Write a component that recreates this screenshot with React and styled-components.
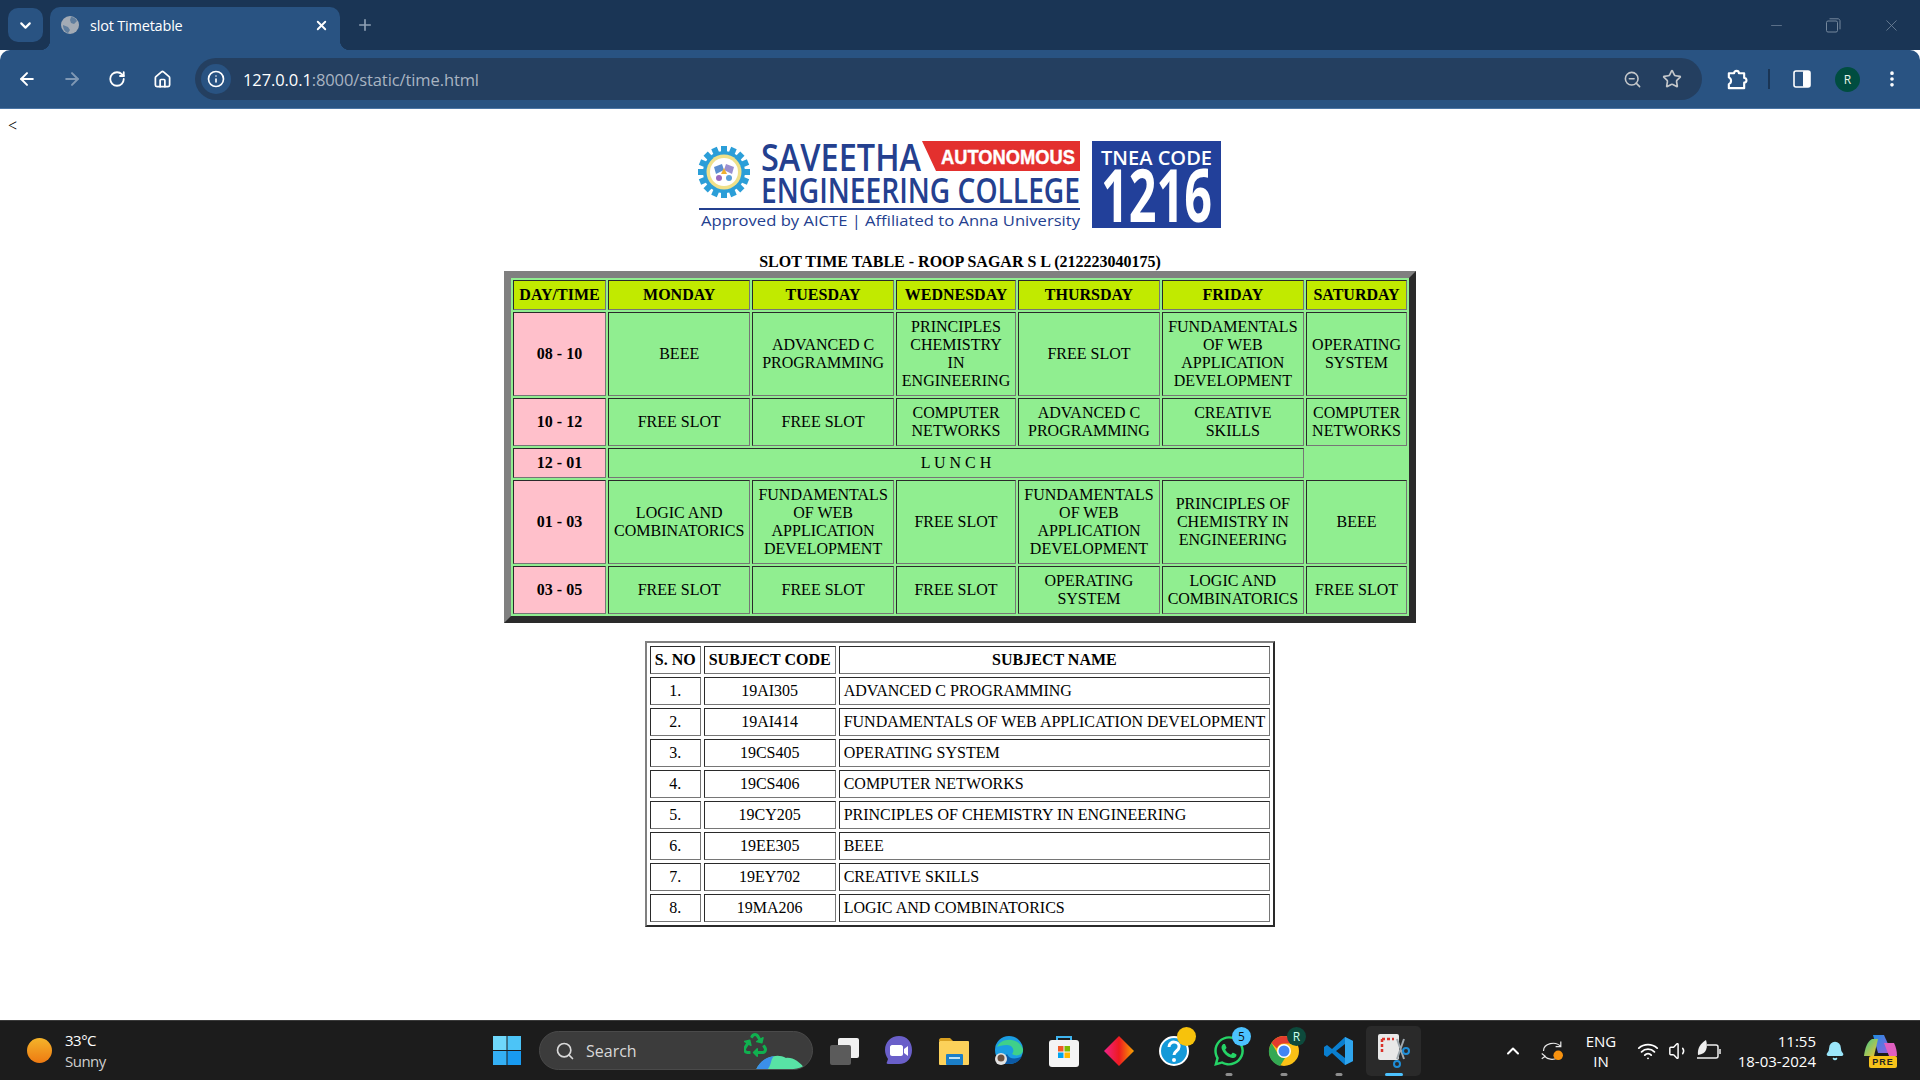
import React from "react";
import styled, { createGlobalStyle } from "styled-components";
import {
  ArrowLeft, ArrowRight, RotateCw, Home, Info, ZoomOut, Star, MoreVertical,
  ChevronDown, ChevronUp, X, Plus, Minus, Wifi, Volume1, Bell, Search,
} from "lucide-react";
import { FaRecycle, FaWhatsapp } from "react-icons/fa";

const UI_FONT = `"Open Sans", "Noto Sans", sans-serif`;

const GlobalStyle = createGlobalStyle`
  html, body { margin: 0; padding: 0; background: #fff; }
  body { width: 1920px; height: 1080px; overflow: hidden; }
`;

const Screen = styled.div`
  width: 1920px;
  height: 1080px;
  display: flex;
  flex-direction: column;
  overflow: hidden;
`;

/* browser chrome */
const TabStrip = styled.div`
  height: 50px;
  flex: none;
  background: #1a3555;
  display: flex;
  align-items: flex-end;
  padding-left: 8px;
  font-family: ${UI_FONT};
`;
const TabMenu = styled.div`
  width: 35px;
  height: 34px;
  margin-bottom: 8px;
  border-radius: 10px;
  background: #295382;
  color: #fff;
  display: flex;
  align-items: center;
  justify-content: center;
`;
const Tab = styled.div`
  position: relative;
  width: 290px;
  height: 43px;
  margin-left: 7px;
  padding: 0 11px 7px;
  box-sizing: border-box;
  background: #295382;
  border-radius: 10px 10px 0 0;
  display: flex;
  align-items: center;
  color: #fff;
  &::before, &::after {
    content: "";
    position: absolute;
    bottom: 0;
    width: 10px;
    height: 10px;
  }
  &::before { left: -10px; background: radial-gradient(circle at 0 0, transparent 10px, #295382 10.5px); }
  &::after { right: -10px; background: radial-gradient(circle at 100% 0, transparent 10px, #295382 10.5px); }
`;
const TabTitle = styled.span`
  flex: 1;
  margin-left: 11px;
  font-size: 14.5px;
  letter-spacing: -0.2px;
`;
const NewTab = styled.div`
  margin: 0 0 8px 16px;
  height: 34px;
  display: flex;
  align-items: center;
  color: #8ea0b4;
`;
const WindowControls = styled.div`
  margin-left: auto;
  height: 50px;
  display: flex;
  align-items: center;
  color: #75889d;
  padding-right: 19px;
  gap: 41px;
`;
const Toolbar = styled.div`
  height: 59px;
  flex: none;
  box-sizing: border-box;
  background: #295382;
  border-radius: 10px 10px 0 0;
  border-bottom: 1px solid #4a74a3;
  display: flex;
  align-items: center;
  padding-left: 9px;
  font-family: ${UI_FONT};
  position: relative;
  &::before {
    content: "";
    position: absolute;
    inset: 0 0 auto 0;
    height: 10px;
    z-index: -1;
    background: #1a3555;
  }
`;
const NavButton = styled.div`
  width: 36px;
  height: 36px;
  margin-right: ${(p) => p.$gap ?? 9}px;
  flex: none;
  display: flex;
  align-items: center;
  justify-content: center;
  color: ${(p) => (p.$dim ? "#7f98b4" : "#fff")};
`;
const Omnibox = styled.div`
  flex: 1;
  height: 42px;
  margin-left: 15px;
  border-radius: 21px;
  background: #243f60;
  display: flex;
  align-items: center;
  padding: 0 17px 0 6px;
`;
const InfoBadge = styled.div`
  width: 30px;
  height: 30px;
  border-radius: 50%;
  background: #295382;
  color: #fff;
  display: flex;
  align-items: center;
  justify-content: center;
`;
const Url = styled.div`
  margin-left: 12px;
  flex: 1;
  font-size: 16.5px;
  letter-spacing: -0.1px;
  color: #a9b4c2;
  b { font-weight: 400; color: #fff; }
`;
const OmniIcon = styled.div`
  width: 26px;
  margin-left: 14px;
  display: flex;
  justify-content: center;
  color: #c4c7ca;
`;
const ToolbarEnd = styled.div`
  width: 218px;
  flex: none;
  height: 100%;
  display: flex;
  align-items: center;
  color: #fff;
`;
const ToolSlot = styled.div`
  flex: none;
  width: ${(p) => p.$w}px;
  margin-left: ${(p) => p.$ml}px;
  display: flex;
  justify-content: center;
`;
const Divider = styled.div`
  width: 2px;
  height: 20px;
  margin-left: 20px;
  background: #1a3555;
`;
const Avatar = styled.div`
  width: 25px;
  height: 25px;
  border-radius: 50%;
  background: #004d40;
  color: #e8f5e9;
  font-size: 12px;
  display: flex;
  align-items: center;
  justify-content: center;
`;

/* page */
const Page = styled.main`
  flex: 1;
  min-height: 0;
  padding: 8px;
  background: #fff;
  font-family: "Liberation Serif", "Times New Roman", serif;
  font-size: 16px;
  line-height: 18px;
  color: #000;
`;
const BackLink = styled.div`
  height: 18px;
`;
const Logo = styled.svg`
  display: block;
  width: 524px;
  height: 90px;
  margin: 5px auto 0;
`;
const Title = styled.div`
  margin-top: 23px;
  text-align: center;
  font-weight: 700;
  height: 18px;
`;
const Slots = styled.table`
  margin: 0 auto;
  width: 912px;
  border-collapse: separate;
  border-spacing: 2px;
  border-style: solid;
  border-width: 7px;
  border-color: #808080 #2a2a2a #2a2a2a #808080;
  background: #90ee90;
  text-align: center;
`;
const Cell = styled.td`
  padding: 5px;
  border: 1px solid;
  border-color: #2a2a2a #767676 #767676 #2a2a2a;
  background: ${(p) => p.$bg || "transparent"};
  font-weight: ${(p) => (p.$bold ? 700 : 400)};
  ${(p) => p.$w && `width: ${p.$w}px;`}
`;
const Subjects = styled.table`
  margin: 18px auto 0;
  border-collapse: separate;
  border-spacing: 3px;
  border-style: solid;
  border-width: 2px;
  border-color: #808080 #2a2a2a #2a2a2a #808080;
`;
const SubjectCell = styled.td`
  padding: 4px;
  border: 1px solid;
  border-color: #2a2a2a #767676 #767676 #2a2a2a;
  text-align: ${(p) => (p.$left ? "left" : "center")};
  font-weight: ${(p) => (p.$bold ? 700 : 400)};
`;

/* taskbar */
const Taskbar = styled.footer`
  height: 60px;
  flex: none;
  box-sizing: border-box;
  background: #1c1c1c;
  border-top: 1px solid #3a3a3a;
  display: grid;
  grid-template-columns: 480px 960px 480px;
  font-family: ${UI_FONT};
  color: #fff;
`;
const Weather = styled.div`
  display: flex;
  align-items: center;
  padding-left: 27px;
`;
const Sun = styled.div`
  width: 25px;
  height: 25px;
  border-radius: 50%;
  background: linear-gradient(#f4b42a, #ee7a12);
`;
const WeatherText = styled.div`
  margin-left: 13px;
  font-size: 15px;
  line-height: 21px;
  letter-spacing: -0.5px;
  span { display: block; color: #cfcfcf; }
`;
const Centre = styled.div`
  display: flex;
  align-items: center;
  padding-left: 13px;
`;
const SearchPill = styled.div`
  width: 274px;
  height: 39px;
  margin-left: 18px;
  box-sizing: border-box;
  padding-left: 15px;
  border-radius: 20px;
  background: #3c3c3c;
  border: 1px solid #4a4a4a;
  display: flex;
  align-items: center;
  color: #d8d8d8;
  font-size: 16px;
  overflow: hidden;
`;
const SearchText = styled.span`
  margin-left: 11px;
  flex: 1;
`;
const Apps = styled.div`
  display: flex;
  margin-left: 3px;
`;
const AppSlot = styled.div`
  position: relative;
  width: 55px;
  height: 50px;
  display: flex;
  align-items: center;
  justify-content: center;
  border-radius: 5px;
  ${(p) => p.$active && "background: #2a2a2a;"}
  &::after {
    content: "";
    display: ${(p) => (p.$open || p.$active ? "block" : "none")};
    position: absolute;
    bottom: 0;
    left: 50%;
    transform: translateX(-50%);
    width: ${(p) => (p.$active ? 18 : 7)}px;
    height: 3px;
    border-radius: 2px;
    background: ${(p) => (p.$active ? "#4cc2ff" : "#8e8e8e")};
  }
`;
const Count = styled.span`
  position: absolute;
  top: 1px;
  right: 5px;
  width: 19px;
  height: 19px;
  border-radius: 50%;
  background: ${(p) => p.$bg};
  color: ${(p) => p.$fg};
  font-size: 12px;
  line-height: 19px;
  text-align: center;
`;
const Tray = styled.div`
  display: flex;
  align-items: center;
  padding-left: 63px;
  font-size: 15px;
`;
const TrayItem = styled.div`
  flex: none;
  width: ${(p) => p.$w}px;
  margin-left: ${(p) => p.$ml || 0}px;
  display: flex;
  flex-direction: column;
  align-items: ${(p) => p.$align || "center"};
  justify-content: center;
  line-height: 20px;
  white-space: nowrap;
`;

const WHITE = "#ffffff";
const HEAD = "#c1ea00";
const PINK = "#ffc0cb";

const DAYS = ["MONDAY", "TUESDAY", "WEDNESDAY", "THURSDAY", "FRIDAY", "SATURDAY"];
const ROWS = [
  ["08 - 10", "BEEE", "ADVANCED C PROGRAMMING", "PRINCIPLES CHEMISTRY IN ENGINEERING", "FREE SLOT", "FUNDAMENTALS OF WEB APPLICATION DEVELOPMENT", "OPERATING SYSTEM"],
  ["10 - 12", "FREE SLOT", "FREE SLOT", "COMPUTER NETWORKS", "ADVANCED C PROGRAMMING", "CREATIVE SKILLS", "COMPUTER NETWORKS"],
  ["12 - 01"],
  ["01 - 03", "LOGIC AND COMBINATORICS", "FUNDAMENTALS OF WEB APPLICATION DEVELOPMENT", "FREE SLOT", "FUNDAMENTALS OF WEB APPLICATION DEVELOPMENT", "PRINCIPLES OF CHEMISTRY IN ENGINEERING", "BEEE"],
  ["03 - 05", "FREE SLOT", "FREE SLOT", "FREE SLOT", "OPERATING SYSTEM", "LOGIC AND COMBINATORICS", "FREE SLOT"],
];
const SUBJECTS = [
  ["19AI305", "ADVANCED C PROGRAMMING"],
  ["19AI414", "FUNDAMENTALS OF WEB APPLICATION DEVELOPMENT"],
  ["19CS405", "OPERATING SYSTEM"],
  ["19CS406", "COMPUTER NETWORKS"],
  ["19CY205", "PRINCIPLES OF CHEMISTRY IN ENGINEERING"],
  ["19EE305", "BEEE"],
  ["19EY702", "CREATIVE SKILLS"],
  ["19MA206", "LOGIC AND COMBINATORICS"],
];

const CollegeLogo = () => {
  const teeth = Array.from({ length: 16 }, (_, i) => i * 22.5);
  return (
    <Logo viewBox="698 140 524 90" aria-label="Saveetha Engineering College">
      <g transform="translate(724 172)">
        {teeth.map((a) => (
          <rect key={a} x="-3" y="-26" width="6" height="7" fill="#2b9ed8" transform={`rotate(${a})`} />
        ))}
        <circle r="21" fill="#2b9ed8" />
        <circle r="17.5" fill="#efe08a" />
        <circle r="14" fill="#fff" />
        <path d="M-10 -5 L-2 -8 L0 -2 L-8 2Z" fill="#5b8fd0" />
        <path d="M10 -5 L2 -8 L0 -2 L8 2Z" fill="#9a8fd0" />
        <path d="M0 -4 L3 2 L-3 2Z" fill="#f0b030" />
        <circle cx="-5" cy="6" r="3" fill="#9a6bc0" />
        <circle cx="5" cy="6" r="3" fill="#5aa0d8" />
      </g>
      <text x="761" y="171" fontFamily="Open Sans, sans-serif" fontWeight="600" fontSize="38" fill="#24408f" textLength="160" lengthAdjust="spacingAndGlyphs">SAVEETHA</text>
      <path d="M922 141 H1080 V171 H936Z" fill="#e3302e" />
      <text x="941" y="164" fontFamily="Liberation Sans, sans-serif" fontWeight="700" fontSize="20" fill="#fff" stroke="#fff" strokeWidth="0.4" textLength="134" lengthAdjust="spacingAndGlyphs">AUTONOMOUS</text>
      <text x="761" y="203" fontFamily="Open Sans, sans-serif" fontWeight="600" fontSize="35" fill="#24408f" textLength="319" lengthAdjust="spacingAndGlyphs">ENGINEERING COLLEGE</text>
      <rect x="699" y="208" width="381" height="2" fill="#24408f" />
      <text x="701" y="226" fontFamily="Open Sans, sans-serif" fontSize="15" fill="#24408f" textLength="379" lengthAdjust="spacingAndGlyphs">Approved by AICTE  |  Affiliated to Anna University</text>
      <rect x="1092" y="141" width="129" height="87" fill="#22409a" />
      <text x="1101" y="165" fontFamily="Open Sans, sans-serif" fontWeight="600" fontSize="20" fill="#fff" textLength="111" lengthAdjust="spacingAndGlyphs">TNEA CODE</text>
      <text x="1101" y="222" fontFamily="Open Sans, sans-serif" fontWeight="700" fontSize="74" fill="#fff" textLength="111" lengthAdjust="spacingAndGlyphs">1216</text>
    </Logo>
  );
};

const Favicon = () => (
  <svg width="18" height="18" viewBox="0 0 18 18" style={{ flex: "none" }}>
    <circle cx="9" cy="9" r="9" fill="#a3abb5" />
    <path d="M10 1c3 0 5 2 6 4l-3 3-3-1-1-3ZM2 9l5 2 2 3-2 3C4 16 2 13 2 9Z" fill="#5f7d9d" />
  </svg>
);
const RestoreIcon = () => (
  <svg width="15" height="15" viewBox="0 0 15 15" fill="none" stroke="currentColor">
    <rect x="0.5" y="3" width="11" height="11" rx="1.5" />
    <path d="M3.5 0.8h8.5c1 0 2 1 2 2v8.5" />
  </svg>
);
const PuzzleIcon = () => (
  <svg width="23" height="23" viewBox="0 0 24 24" fill="none" stroke="#fff" strokeWidth="2.2" strokeLinejoin="round">
    <path d="M4 5.5h5.5a2.5 2.5 0 0 1 5 0H20v5a2.4 2.4 0 0 1 0 4.8V21H4v-4.2a3.8 3.8 0 0 0 0-7Z" />
  </svg>
);
const TaskView = () => (
  <svg width="30" height="30" viewBox="0 0 30 30">
    <rect x="9" y="2" width="21" height="20" rx="2" fill="#f0f0f0" />
    <rect x="1" y="9" width="21" height="20" rx="2" fill="#5b5b5b" />
  </svg>
);
const Teams = () => (
  <svg width="30" height="32" viewBox="0 0 30 32">
    <path d="M15 1c8 0 13 6 13 14s-5 14-13 14H4c-1 0-2-1-1-2l1-3C2 21 1 18 1 15 1 7 7 1 15 1Z" fill="#6a5fc9" />
    <path d="M8 10h9c1 0 2 1 2 2v7c0 1-1 2-2 2H8c-1 0-2-1-2-2v-7c0-1 1-2 2-2Z" fill="#fff" />
    <path d="M20 14l4-3v10l-4-3Z" fill="#fff" />
  </svg>
);
const Folder = () => (
  <svg width="30" height="28" viewBox="0 0 30 28">
    <path d="M0 3c0-1 1-2 2-2h9l3 3h-14Z" fill="#d9a020" />
    <rect y="4" width="30" height="24" rx="1" fill="#fcd15a" />
    <rect x="7" y="17" width="17" height="11" rx="1" fill="#1b7fc8" />
    <rect x="10" y="20" width="11" height="2" fill="#bfe3f7" />
  </svg>
);
const Edge = () => (
  <svg width="30" height="32" viewBox="0 0 30 32">
    <circle cx="15" cy="15" r="14" fill="#1b9de2" />
    <path d="M3 12C6 3 24 1 29 14c1 6-7 8-11 5 3-3 1-9-5-9-5 0-8 1-10 2Z" fill="#3fd08a" />
    <path d="M15 29c6 0 11-3 13-8-4 3-13 4-15-2l-8 8c3 2 6 2 10 2Z" fill="#0c5aa6" />
    <circle cx="7" cy="24" r="6" fill="#e2e2e2" />
    <circle cx="7" cy="23" r="3.5" fill="#6a5040" />
  </svg>
);
const Store = () => (
  <svg width="30" height="32" viewBox="0 0 30 32">
    <path d="M8 5V2h14v3" fill="none" stroke="#3fb4ee" strokeWidth="2" />
    <rect y="5" width="30" height="27" rx="3" fill="#f4f4f4" />
    <rect x="9" y="11" width="5.5" height="5.5" fill="#ef5a28" />
    <rect x="15.5" y="11" width="5.5" height="5.5" fill="#7fba00" />
    <rect x="9" y="17.5" width="5.5" height="5.5" fill="#00a4ef" />
    <rect x="15.5" y="17.5" width="5.5" height="5.5" fill="#ffb900" />
  </svg>
);
const Diamond = () => (
  <svg width="30" height="30" viewBox="0 0 30 30">
    <defs>
      <linearGradient id="diamond" x1="0" x2="1" y1="0" y2="0">
        <stop offset="0" stopColor="#f0228a" />
        <stop offset="0.5" stopColor="#ee1a20" />
        <stop offset="1" stopColor="#f7a400" />
      </linearGradient>
    </defs>
    <path d="M15 0 30 15 15 30 0 15Z" fill="url(#diamond)" />
  </svg>
);
const Help = () => (
  <svg width="30" height="30" viewBox="0 0 30 30">
    <circle cx="15" cy="15" r="14" fill="#1499d8" stroke="#fff" strokeWidth="2" />
    <path d="M10 11c0-7 11-6 10 0 0 4-5 4-5 8" fill="none" stroke="#fff" strokeWidth="3" />
    <circle cx="15" cy="24" r="2" fill="#fff" />
  </svg>
);
const Chrome = () => (
  <svg width="32" height="32" viewBox="0 0 32 32">
    <circle cx="16" cy="16" r="15" fill="#fbc116" />
    <path d="M16 1a15 15 0 0 1 13 7.5H16a7.5 7.5 0 0 0-7 5L3.5 8A15 15 0 0 1 16 1Z" fill="#e33b2e" />
    <path d="M3.5 8 10 19a7.5 7.5 0 0 0 7 4l-5 8A15 15 0 0 1 3.5 8Z" fill="#34a853" />
    <circle cx="16" cy="16" r="7" fill="#fff" />
    <circle cx="16" cy="16" r="5.5" fill="#4285f4" />
  </svg>
);
const VsCode = () => (
  <svg width="30" height="30" viewBox="0 0 30 30">
    <path d="M21 1 29 5V25L21 29 8 17l-5 4-3-2V11l3-2 5 4Z" fill="#0a7fd0" />
    <path d="M21 8 12 15l9 7Z" fill="#1c1c1c" />
    <path d="M21 1 29 5V25L21 29Z" fill="#2fa5ed" />
  </svg>
);
const Snip = () => (
  <svg width="34" height="36" viewBox="0 0 34 36">
    <rect x="1" y="1" width="21" height="26" rx="2" fill="#e8e8e8" />
    <path d="M5 6h12M5 6v14" stroke="#d9322a" strokeWidth="2.5" strokeDasharray="3 2" fill="none" />
    <path d="M19 8 26 28M26 8 19 28" stroke="#9ea7ad" strokeWidth="2" transform="translate(1 -2)" />
    <circle cx="20" cy="31" r="3" fill="none" stroke="#1e8ed8" strokeWidth="2" />
    <circle cx="29" cy="18" r="3" fill="none" stroke="#1e8ed8" strokeWidth="2" />
  </svg>
);
const WinLogo = () => (
  <svg width="28" height="29" viewBox="0 0 28 29" style={{ flex: "none" }}>
    <rect width="13.5" height="14" fill="#6fd8fb" />
    <rect x="14.5" width="13.5" height="14" fill="#4cc4f7" />
    <rect y="15" width="13.5" height="14" fill="#34b0f5" />
    <rect x="14.5" y="15" width="13.5" height="14" fill="#189af0" />
  </svg>
);
const SearchArt = () => (
  <svg width="68" height="39" viewBox="0 0 68 39" style={{ flex: "none" }}>
    <path d="M12 39c4-11 20-18 30-12 7-1 14 4 20 12Z" fill="#58e3a5" />
    <path d="M12 39c3-8 10-13 18-14-4 4-2 9-7 14Z" fill="#3b8fe8" />
    <FaRecycle x="-1" y="2" size={24} color="#10b04f" />
  </svg>
);
const SyncIcon = () => (
  <svg width="26" height="22" viewBox="0 0 30 24" fill="none" stroke="#e8e8e8" strokeWidth="1.4">
    <path d="M4 12a11 9 0 0 1 20-5M24 1v6h-6" />
    <path d="M20 20a11 9 0 0 1-15-2M2 15l4 3-4 3" />
    <circle cx="21" cy="17" r="5.5" fill="#f7920f" stroke="none" />
  </svg>
);
const BatteryIcon = () => (
  <svg width="26" height="22" viewBox="0 0 26 22" fill="none" stroke="#eee" strokeWidth="1.5">
    <path d="M12 5h9c1 0 2 1 2 2v9c0 1-1 2-2 2H2" />
    <path d="M25 9v5" />
    <path d="M3 15C2 8 6 3 11 0c2 7 1 14-8 15Z" fill="#eee" stroke="none" />
  </svg>
);
const Copilot = () => (
  <svg width="34" height="34" viewBox="0 0 34 34">
    <defs>
      <linearGradient id="copilotA" x1="0" x2="1" y1="0" y2="1">
        <stop offset="0" stopColor="#3fc98a" />
        <stop offset="1" stopColor="#f2c230" />
      </linearGradient>
      <linearGradient id="copilotB" x1="0" x2="1" y1="0" y2="1">
        <stop offset="0" stopColor="#1f8ce0" />
        <stop offset="1" stopColor="#9a5fe0" />
      </linearGradient>
    </defs>
    <path d="M10 1h11l8 18H15Z" fill="url(#copilotB)" />
    <path d="M9 5h6l-4 17H1C2 14 4 8 9 5Z" fill="url(#copilotA)" />
    <path d="M21 9h10c2 4 3 8 3 13H26Z" fill="#e05fc0" />
    <rect x="6" y="22" width="28" height="12" rx="2" fill="#f7c21a" />
    <text x="20" y="31" textAnchor="middle" fontFamily="Liberation Sans, sans-serif" fontWeight="700" fontSize="9" letterSpacing="1" fill="#222">PRE</text>
  </svg>
);

const App = () => (
  <Screen>
    <GlobalStyle />
    <TabStrip>
      <TabMenu><ChevronDown size={17} strokeWidth={3} /></TabMenu>
      <Tab>
        <Favicon />
        <TabTitle>slot Timetable</TabTitle>
        <X size={15} strokeWidth={3} />
      </Tab>
      <NewTab><Plus size={18} strokeWidth={2.2} /></NewTab>
      <WindowControls>
        <Minus size={17} strokeWidth={1} />
        <RestoreIcon />
        <X size={19} strokeWidth={1} />
      </WindowControls>
    </TabStrip>
    <Toolbar>
      <NavButton><ArrowLeft size={20} strokeWidth={2.4} /></NavButton>
      <NavButton $dim><ArrowRight size={20} strokeWidth={2.4} /></NavButton>
      <NavButton><RotateCw size={18} strokeWidth={2.4} /></NavButton>
      <NavButton $gap={0}><Home size={19} strokeWidth={2.2} /></NavButton>
      <Omnibox>
        <InfoBadge><Info size={18} strokeWidth={2.2} /></InfoBadge>
        <Url><b>127.0.0.1</b>:8000/static/time.html</Url>
        <OmniIcon><ZoomOut size={19} strokeWidth={2} /></OmniIcon>
        <OmniIcon><Star size={20} strokeWidth={2} /></OmniIcon>
      </Omnibox>
      <ToolbarEnd>
        <ToolSlot $w={24} $ml={22}><PuzzleIcon /></ToolSlot>
        <Divider />
        <ToolSlot $w={20} $ml={22}>
          <svg width="18" height="18" viewBox="0 0 18 18">
            <rect x="1" y="1" width="16" height="16" rx="2" fill="none" stroke="#fff" strokeWidth="1.6" />
            <rect x="10" y="1" width="7" height="16" rx="1" fill="#fff" />
          </svg>
        </ToolSlot>
        <ToolSlot $w={25} $ml={23}><Avatar>R</Avatar></ToolSlot>
        <ToolSlot $w={24} $ml={20}><MoreVertical size={20} strokeWidth={2.4} /></ToolSlot>
      </ToolbarEnd>
    </Toolbar>

    <Page>
      <BackLink>&lt;</BackLink>
      <CollegeLogo />
      <Title>SLOT TIME TABLE - ROOP SAGAR S L (212223040175)</Title>
      <Slots>
        <tbody>
          <tr>
            <Cell $bg={HEAD} $bold $w={81}>DAY/TIME</Cell>
            {DAYS.map((d) => <Cell key={d} $bg={HEAD} $bold>{d}</Cell>)}
          </tr>
          {ROWS.map(([time, ...slots]) => (
            <tr key={time}>
              <Cell $bg={PINK} $bold>{time}</Cell>
              {slots.length === 0 && <Cell colSpan={5}>L U N C H</Cell>}
              {slots.map((s, i) => <Cell key={i}>{s}</Cell>)}
            </tr>
          ))}
        </tbody>
      </Slots>
      <Subjects>
        <tbody>
          <tr>
            <SubjectCell $bold>S. NO</SubjectCell>
            <SubjectCell $bold>SUBJECT CODE</SubjectCell>
            <SubjectCell $bold>SUBJECT NAME</SubjectCell>
          </tr>
          {SUBJECTS.map(([code, name], i) => (
            <tr key={code}>
              <SubjectCell>{i + 1}.</SubjectCell>
              <SubjectCell>{code}</SubjectCell>
              <SubjectCell $left>{name}</SubjectCell>
            </tr>
          ))}
        </tbody>
      </Subjects>
    </Page>

    <Taskbar>
      <Weather>
        <Sun />
        <WeatherText>33°C<span>Sunny</span></WeatherText>
      </Weather>
      <Centre>
        <WinLogo />
        <SearchPill>
          <Search size={20} strokeWidth={2} />
          <SearchText>Search</SearchText>
          <SearchArt />
        </SearchPill>
        <Apps>
          <AppSlot><TaskView /></AppSlot>
          <AppSlot><Teams /></AppSlot>
          <AppSlot><Folder /></AppSlot>
          <AppSlot><Edge /></AppSlot>
          <AppSlot><Store /></AppSlot>
          <AppSlot><Diamond /></AppSlot>
          <AppSlot><Help /><Count $bg="#f7c20c" $fg="#f7c20c" /></AppSlot>
          <AppSlot $open><FaWhatsapp size={34} color="#25d366" /><Count $bg="#4cc2ff" $fg="#111">5</Count></AppSlot>
          <AppSlot $open><Chrome /><Count $bg="#0d4a3c" $fg="#cfe">R</Count></AppSlot>
          <AppSlot $open><VsCode /></AppSlot>
          <AppSlot $active><Snip /></AppSlot>
        </Apps>
      </Centre>
      <Tray>
        <TrayItem $w={20}><ChevronUp size={20} strokeWidth={2.4} color={WHITE} /></TrayItem>
        <TrayItem $w={30} $ml={15}><SyncIcon /></TrayItem>
        <TrayItem $w={40} $ml={13}><span>ENG</span><span>IN</span></TrayItem>
        <TrayItem $w={24} $ml={15}><Wifi size={22} strokeWidth={2} /></TrayItem>
        <TrayItem $w={24} $ml={7}><Volume1 size={22} strokeWidth={1.6} /></TrayItem>
        <TrayItem $w={26} $ml={4}><BatteryIcon /></TrayItem>
        <TrayItem $w={90} $ml={5} $align="flex-end"><span>11:55</span><span>18-03-2024</span></TrayItem>
        <TrayItem $w={22} $ml={8}><Bell size={20} fill="#9ae6fb" color="#9ae6fb" /></TrayItem>
        <TrayItem $w={34} $ml={17}><Copilot /></TrayItem>
      </Tray>
    </Taskbar>
  </Screen>
);

export default App;
